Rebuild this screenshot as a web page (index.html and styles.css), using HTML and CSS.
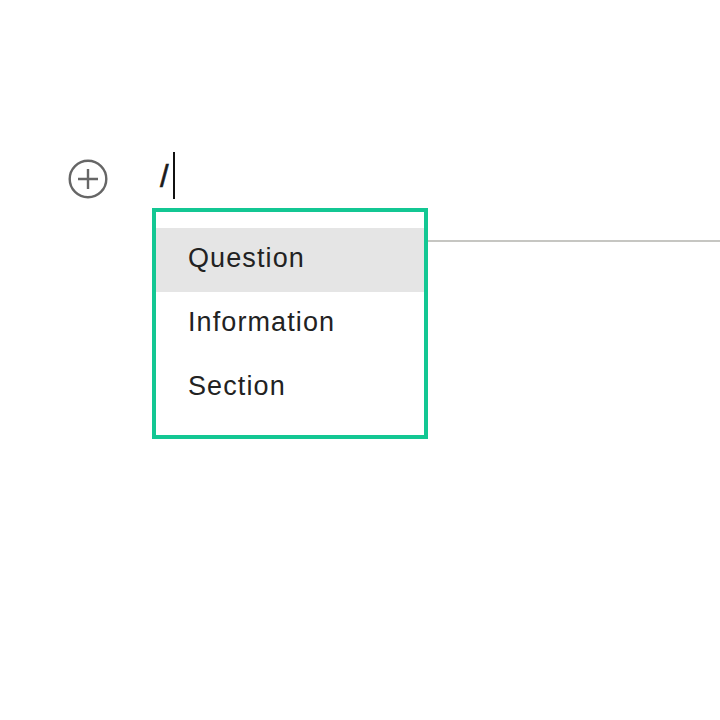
FILE: index.html
```html
<!DOCTYPE html>
<html lang="en">
<head>
    <meta charset="UTF-8">
    <meta name="viewport" content="width=device-width, initial-scale=1.0">
    <title>Block Editor</title>
<link rel="stylesheet" href="styles.css">
</head>
<body>
    <div class="editor">
        <div class="row">
            <button class="add-btn" title="Add block">
                <svg width="40" height="40" viewBox="0 0 40 40">
                    <circle cx="20" cy="20" r="18.3" fill="none" stroke="#666" stroke-width="2.4"/>
                    <path d="M10 20 H30 M20 10 V30" stroke="#666" stroke-width="2.4" fill="none"/>
                </svg>
            </button>
            <div class="field">
                <span class="typed">/</span><span class="caret"></span>

                <!-- slash command menu -->
                <ul class="menu">
                    <li class="menu-item active">Question</li>
                    <li class="menu-item">Information</li>
                    <li class="menu-item">Section</li>
                </ul>
            </div>
        </div>
        <div class="divider"></div>
    </div>
</body>
</html>
```

FILE: styles.css
```css
body {
    margin: 0;
    font-family: "Liberation Sans", Arial, sans-serif;
    background: #ffffff;
    color: #222;
}

.editor {
    padding-top: 152px;
    min-height: 568px;
}

.row {
    display: flex;
    align-items: flex-start;
    height: 47px;
    padding-left: 68px;
}

.add-btn {
    width: 40px;
    height: 40px;
    margin-top: 7px;
    padding: 0;
    border: none;
    background: none;
    display: flex;
    cursor: pointer;
}

.field {
    position: relative;
    display: flex;
    align-items: center;
    height: 47px;
    margin-left: 52px;
}

.typed {
    font-size: 31px;
    color: #1a1a1a;
    -webkit-text-stroke: 0.6px #1a1a1a;
    margin-top: 2px;
}

.caret {
    width: 2px;
    height: 47px;
    background: #111;
    margin-left: 4px;
}

.divider {
    margin-top: 41px;
    margin-left: 152px;
    height: 2px;
    background: #c6c6c2;
}

/* Slash menu */
.menu {
    position: absolute;
    top: 56px;
    left: -8px;
    width: 268px;
    margin: 0;
    padding: 16px 0 15px;
    list-style: none;
    background: #fff;
    border: 4px solid #13c793;
    z-index: 10;
}

.menu-item {
    height: 64px;
    line-height: 61px;
    padding-bottom: 3px;
    box-sizing: border-box;
    padding-left: 32px;
    font-size: 27px;
    letter-spacing: 1.1px;
    color: #222;
    cursor: pointer;
}

.menu-item.active {
    background: #e5e5e5;
}
```
